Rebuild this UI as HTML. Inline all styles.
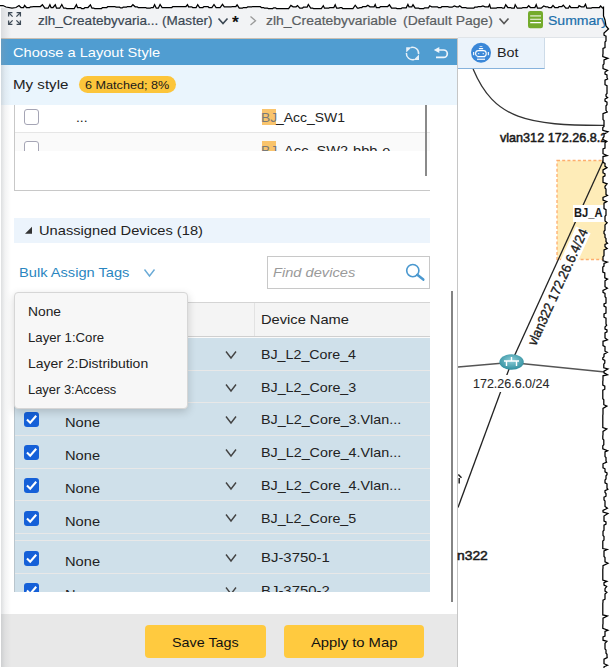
<!DOCTYPE html>
<html><head><meta charset="utf-8"><style>
*{box-sizing:border-box;margin:0;padding:0}
html,body{width:611px;height:668px;overflow:hidden;background:#fff;font-family:"Liberation Sans",sans-serif;color:#222}
.a{position:absolute}
.t{position:absolute;white-space:nowrap;line-height:1;transform-origin:0 0;}
</style></head><body>
<div class="a" style="left:0;top:0;width:611px;height:38px;background:#f2f3f5"></div>
<div class="a" style="left:458px;top:37px;width:153px;height:1px;background:#e0e4e8"></div>
<div class="a" style="left:1px;top:38px;width:456px;height:629px;background:#fff"></div>
<div class="a" style="left:1px;top:39px;width:456px;height:26px;background:#509dd1"></div>
<div class="a" style="left:1px;top:38px;width:456px;height:1px;background:#c9bfb3"></div>
<div class="a" style="left:1px;top:65px;width:456px;height:40px;background:#eaf5fd"></div>
<div class="a" style="left:1px;top:614px;width:456px;height:53px;background:#e8e8e8"></div>
<div class="a" style="left:457px;top:38px;width:1px;height:630px;background:#c6c6c6"></div>
<div class="t" style="left:38.39px;top:13.57px;font-size:13.5px;color:#3b4753;font-weight:normal;font-style:normal;transform:scaleX(1.0021);-webkit-text-stroke:0.2px currentColor">zlh_Createbyvaria... (Master)</div>
<div class="t" style="left:231.68px;top:14.21px;font-size:17px;color:#111;font-weight:bold;font-style:normal;transform:scaleX(1.0219);">*</div>
<div class="t" style="left:265.97px;top:13.57px;font-size:13.5px;color:#5a5e62;font-weight:normal;font-style:normal;transform:scaleX(1.0299);-webkit-text-stroke:0.2px currentColor">zlh_Createbyvariable</div>
<div class="t" style="left:402.95px;top:13.57px;font-size:13.5px;color:#5a5e62;font-weight:normal;font-style:normal;transform:scaleX(1.0325);-webkit-text-stroke:0.2px currentColor">(Default Page)</div>
<div class="t" style="left:548.11px;top:13.57px;font-size:13.5px;color:#1b6fab;font-weight:normal;font-style:normal;transform:scaleX(1.0397);-webkit-text-stroke:0.2px currentColor">Summary</div>
<svg class="a" style="left:217px;top:16px" width="12" height="10"><path d="M1.5 2.5 L6 7.5 L10.5 2.5" fill="none" stroke="#3b4753" stroke-width="1.6"/></svg>
<svg class="a" style="left:248px;top:15px" width="10" height="12"><path d="M2.5 1.5 L7.5 5.8 L2.5 10" fill="none" stroke="#9a9a9a" stroke-width="1.3"/></svg>
<svg class="a" style="left:498px;top:16px" width="12" height="10"><path d="M1.5 2.5 L6 7.5 L10.5 2.5" fill="none" stroke="#555" stroke-width="1.6"/></svg>
<svg class="a" style="left:7px;top:11px" width="16" height="16"><g fill="none" stroke="#3f4b57" stroke-width="1.3"><path d="M1.6 5.4V1.6H5.4M1.6 1.6L5.6 5.6"/><path d="M13.4 5.4V1.6H9.6M13.4 1.6L9.4 5.6"/><path d="M1.6 9.6V13.4H5.4M1.6 13.4L5.6 9.4"/><path d="M13.4 9.6V13.4H9.6M13.4 13.4L9.4 9.4"/></g></svg>
<svg class="a" style="left:528px;top:11px" width="16" height="18"><rect x="0" y="0" width="15" height="17.3" rx="2.2" fill="#74ab2c"/><path d="M2.2 4.8H13M2.2 8.4H13M2.2 11.6H13" stroke="#fff" stroke-width="1.3"/><path d="M2.2 4.8H13M2.2 8.4H13" stroke="#74ab2c" stroke-opacity="0.3" stroke-width="1.3"/></svg>
<div class="t" style="left:13.23px;top:45.57px;font-size:13.5px;color:#ffffff;font-weight:normal;font-style:normal;transform:scaleX(1.0829);">Choose a Layout Style</div>
<svg class="a" style="left:404px;top:45px" width="18" height="17"><g fill="none" stroke="#e6f0f8" stroke-width="1.5"><path d="M7 2.4A6.2 6.2 0 0 1 14.6 9.2"/><path d="M2.4 8A6.2 6.2 0 0 0 10.2 14.5"/></g><path d="M2.2 2.2H7.6L2.2 7.6Z" fill="#e6f0f8"/><path d="M15 9.5V15H9.5Z" fill="#e6f0f8"/></svg>
<svg class="a" style="left:432px;top:46px" width="17" height="14"><path d="M6.5 4H11.6A3.7 3.7 0 0 1 11.6 11.4H4" fill="none" stroke="#eef5fb" stroke-width="1.7"/><path d="M1.8 4L7.3 0.9V7.1Z" fill="#eef5fb"/></svg>
<div class="t" style="left:12.64px;top:77.57px;font-size:13.5px;color:#222;font-weight:normal;font-style:normal;transform:scaleX(1.1190);">My style</div>
<div class="a" style="left:79px;top:76px;width:97px;height:17px;border-radius:9px;background:#fcc53b"></div>
<div class="t" style="left:85.29px;top:79.10px;font-size:11.7px;color:#1a1a1a;font-weight:normal;font-style:normal;transform:scaleX(1.0803);">6 Matched; 8%</div>
<div class="a" style="left:14px;top:105px;width:1px;height:86px;background:#c8c8c8"></div>
<div class="a" style="left:14px;top:190px;width:416px;height:1px;background:#c8c8c8"></div>
<div class="a" style="left:15px;top:132px;width:415px;height:1px;background:#e6e6e6"></div>
<div class="a" style="left:15px;top:133px;width:415px;height:18px;background:#fafafa;overflow:hidden"><div class="a" style="left:9px;top:8px;width:15px;height:15px;border:1.5px solid #a5a5b5;border-radius:3px;background:#fff"></div></div>
<div class="a" style="left:24px;top:109px;width:15px;height:16px;border:1.5px solid #a5a5b5;border-radius:3px;background:#fff"></div>
<div class="t" style="left:75.62px;top:111.00px;font-size:13px;color:#222;font-weight:normal;font-style:normal;transform:scaleX(1.0699);">...</div>
<div class="a" style="left:262px;top:109px;width:14px;height:16px;background:#f9c46c"></div>
<div class="t" style="left:260.75px;top:110.57px;font-size:13.5px;color:#7a7a7a;font-weight:normal;font-style:normal;transform:scaleX(1.0315);">BJ</div>
<div class="t" style="left:276.17px;top:110.57px;font-size:13.5px;color:#222;font-weight:normal;font-style:normal;transform:scaleX(1.0329);">_Acc_SW1</div>
<div class="a" style="left:0;top:133px;width:457px;height:18px;overflow:hidden"><div class="a" style="left:262px;top:8px;width:14px;height:16px;background:#f9c46c"></div><div class="t" style="left:260.75px;top:10.57px;font-size:13.5px;color:#7a7a7a;font-weight:normal;font-style:normal;transform:scaleX(1.0315);">BJ</div><div class="t" style="left:276.18px;top:10.57px;font-size:13.5px;color:#222;font-weight:normal;font-style:normal;transform:scaleX(1.0814);">_Acc_SW2-bbb-e</div></div>
<div class="a" style="left:425px;top:105px;width:2px;height:71px;background:#8a8a8a"></div>
<div class="a" style="left:451px;top:291px;width:2px;height:311px;background:#848484"></div>
<div class="a" style="left:14px;top:218px;width:416px;height:25px;background:#ecf4fc"></div>
<svg class="a" style="left:24px;top:225px" width="10" height="10"><path d="M8 1.8V8.7H1Z" fill="#333"/></svg>
<div class="t" style="left:39.01px;top:223.97px;font-size:13.5px;color:#222;font-weight:normal;font-style:normal;transform:scaleX(1.0871);">Unassigned Devices (18)</div>
<div class="t" style="left:19.19px;top:265.57px;font-size:13.5px;color:#2a86c0;font-weight:normal;font-style:normal;transform:scaleX(1.0841);">Bulk Assign Tags</div>
<svg class="a" style="left:143px;top:267px" width="13" height="12"><path d="M1.5 2.5L6.5 9L11.5 2.5" fill="none" stroke="#6aaad6" stroke-width="1.4"/></svg>
<div class="a" style="left:267px;top:256px;width:163px;height:33px;border:1px solid #c8c8c8;background:#fff"></div>
<div class="t" style="left:273.37px;top:265.57px;font-size:13.5px;color:#9a9a9a;font-weight:normal;font-style:italic;transform:scaleX(1.0846);">Find devices</div>
<svg class="a" style="left:404px;top:263px" width="22" height="20"><circle cx="8.8" cy="7.6" r="6.1" fill="none" stroke="#4a98cf" stroke-width="1.6"/><path d="M13.3 11.8L19.3 16.6" stroke="#4a98cf" stroke-width="2.5" stroke-linecap="round"/></svg>
<div class="a" style="left:14px;top:302px;width:416px;height:1px;background:#d4d4d4"></div>
<div class="a" style="left:14px;top:303px;width:416px;height:33px;background:#f4f4f4"></div>
<div class="a" style="left:14px;top:336px;width:416px;height:1px;background:#cfcfcf"></div>
<div class="a" style="left:254px;top:303px;width:1px;height:33px;background:#e2e2e2"></div>
<div class="t" style="left:260.68px;top:312.87px;font-size:13.5px;color:#222;font-weight:normal;font-style:normal;transform:scaleX(1.0853);">Device Name</div>
<div class="a" style="left:14px;top:337px;width:416px;height:1px;background:#fafafa"></div>
<div class="a" style="left:14px;top:338px;width:416px;height:254px;background:#cfe0ea;overflow:hidden">
<div class="a" style="left:0;top:0;width:1px;height:254px;background:#b9c5cd"></div>
<div class="a" style="left:1px;top:32px;width:415px;height:1px;background:#e8e8e8"></div>
<div class="a" style="left:10px;top:8px;width:15px;height:15px;background:#1560d8;border-radius:3px"></div>
<svg class="a" style="left:10px;top:8px" width="15" height="15"><path d="M3 7.6L6.2 10.8L12.2 3.8" fill="none" stroke="#fff" stroke-width="2.1"/></svg>
<div class="t" style="left:51.28px;top:13.07px;font-size:13.5px;color:#222;font-weight:normal;font-style:normal;transform:scaleX(1.0859);">None</div>
<svg class="a" style="left:211px;top:12.0px" width="12" height="10"><path d="M1 1.5L6 8L11 1.5" fill="none" stroke="#444" stroke-width="1.4"/></svg>
<div class="t" style="left:246.72px;top:10.07px;font-size:13.5px;color:#222;font-weight:normal;font-style:normal;transform:scaleX(1.0548);">BJ_L2_Core_4</div>
<div class="a" style="left:1px;top:64px;width:415px;height:1px;background:#e8e8e8"></div>
<div class="a" style="left:10px;top:41px;width:15px;height:15px;background:#1560d8;border-radius:3px"></div>
<svg class="a" style="left:10px;top:41px" width="15" height="15"><path d="M3 7.6L6.2 10.8L12.2 3.8" fill="none" stroke="#fff" stroke-width="2.1"/></svg>
<div class="t" style="left:51.28px;top:45.57px;font-size:13.5px;color:#222;font-weight:normal;font-style:normal;transform:scaleX(1.0859);">None</div>
<svg class="a" style="left:211px;top:44.5px" width="12" height="10"><path d="M1 1.5L6 8L11 1.5" fill="none" stroke="#444" stroke-width="1.4"/></svg>
<div class="t" style="left:246.72px;top:42.57px;font-size:13.5px;color:#222;font-weight:normal;font-style:normal;transform:scaleX(1.0574);">BJ_L2_Core_3</div>
<div class="a" style="left:1px;top:97px;width:415px;height:1px;background:#e8e8e8"></div>
<div class="a" style="left:10px;top:74px;width:15px;height:15px;background:#1560d8;border-radius:3px"></div>
<svg class="a" style="left:10px;top:74px" width="15" height="15"><path d="M3 7.6L6.2 10.8L12.2 3.8" fill="none" stroke="#fff" stroke-width="2.1"/></svg>
<div class="t" style="left:51.28px;top:78.27px;font-size:13.5px;color:#222;font-weight:normal;font-style:normal;transform:scaleX(1.0859);">None</div>
<svg class="a" style="left:211px;top:77.0px" width="12" height="10"><path d="M1 1.5L6 8L11 1.5" fill="none" stroke="#444" stroke-width="1.4"/></svg>
<div class="t" style="left:246.71px;top:75.17px;font-size:13.5px;color:#222;font-weight:normal;font-style:normal;transform:scaleX(1.0613);">BJ_L2_Core_3.Vlan...</div>
<div class="a" style="left:1px;top:130px;width:415px;height:1px;background:#e8e8e8"></div>
<div class="a" style="left:10px;top:107px;width:15px;height:15px;background:#1560d8;border-radius:3px"></div>
<svg class="a" style="left:10px;top:107px" width="15" height="15"><path d="M3 7.6L6.2 10.8L12.2 3.8" fill="none" stroke="#fff" stroke-width="2.1"/></svg>
<div class="t" style="left:51.28px;top:111.07px;font-size:13.5px;color:#222;font-weight:normal;font-style:normal;transform:scaleX(1.0859);">None</div>
<svg class="a" style="left:211px;top:110.0px" width="12" height="10"><path d="M1 1.5L6 8L11 1.5" fill="none" stroke="#444" stroke-width="1.4"/></svg>
<div class="t" style="left:246.71px;top:108.07px;font-size:13.5px;color:#222;font-weight:normal;font-style:normal;transform:scaleX(1.0613);">BJ_L2_Core_4.Vlan...</div>
<div class="a" style="left:1px;top:162px;width:415px;height:1px;background:#e8e8e8"></div>
<div class="a" style="left:10px;top:140px;width:15px;height:15px;background:#1560d8;border-radius:3px"></div>
<svg class="a" style="left:10px;top:140px" width="15" height="15"><path d="M3 7.6L6.2 10.8L12.2 3.8" fill="none" stroke="#fff" stroke-width="2.1"/></svg>
<div class="t" style="left:51.28px;top:143.87px;font-size:13.5px;color:#222;font-weight:normal;font-style:normal;transform:scaleX(1.0859);">None</div>
<svg class="a" style="left:211px;top:142.5px" width="12" height="10"><path d="M1 1.5L6 8L11 1.5" fill="none" stroke="#444" stroke-width="1.4"/></svg>
<div class="t" style="left:246.71px;top:140.87px;font-size:13.5px;color:#222;font-weight:normal;font-style:normal;transform:scaleX(1.0613);">BJ_L2_Core_4.Vlan...</div>
<div class="a" style="left:1px;top:195px;width:415px;height:1px;background:#e8e8e8"></div>
<div class="a" style="left:10px;top:173px;width:15px;height:15px;background:#1560d8;border-radius:3px"></div>
<svg class="a" style="left:10px;top:173px" width="15" height="15"><path d="M3 7.6L6.2 10.8L12.2 3.8" fill="none" stroke="#fff" stroke-width="2.1"/></svg>
<div class="t" style="left:51.28px;top:176.57px;font-size:13.5px;color:#222;font-weight:normal;font-style:normal;transform:scaleX(1.0859);">None</div>
<svg class="a" style="left:211px;top:175.0px" width="12" height="10"><path d="M1 1.5L6 8L11 1.5" fill="none" stroke="#444" stroke-width="1.4"/></svg>
<div class="t" style="left:246.72px;top:173.57px;font-size:13.5px;color:#222;font-weight:normal;font-style:normal;transform:scaleX(1.0571);">BJ_L2_Core_5</div>
<div class="a" style="left:1px;top:235px;width:415px;height:1px;background:#e8e8e8"></div>
<div class="a" style="left:10px;top:213px;width:15px;height:15px;background:#1560d8;border-radius:3px"></div>
<svg class="a" style="left:10px;top:213px" width="15" height="15"><path d="M3 7.6L6.2 10.8L12.2 3.8" fill="none" stroke="#fff" stroke-width="2.1"/></svg>
<div class="t" style="left:51.28px;top:216.57px;font-size:13.5px;color:#222;font-weight:normal;font-style:normal;transform:scaleX(1.0859);">None</div>
<svg class="a" style="left:211px;top:215.0px" width="12" height="10"><path d="M1 1.5L6 8L11 1.5" fill="none" stroke="#444" stroke-width="1.4"/></svg>
<div class="t" style="left:246.66px;top:213.37px;font-size:13.5px;color:#222;font-weight:normal;font-style:normal;transform:scaleX(1.1034);">BJ-3750-1</div>
<div class="a" style="left:1px;top:268px;width:415px;height:1px;background:#e8e8e8"></div>
<div class="a" style="left:10px;top:245px;width:15px;height:15px;background:#1560d8;border-radius:3px"></div>
<svg class="a" style="left:10px;top:245px" width="15" height="15"><path d="M3 7.6L6.2 10.8L12.2 3.8" fill="none" stroke="#fff" stroke-width="2.1"/></svg>
<div class="t" style="left:51.28px;top:249.57px;font-size:13.5px;color:#222;font-weight:normal;font-style:normal;transform:scaleX(1.0859);">None</div>
<svg class="a" style="left:211px;top:248.0px" width="12" height="10"><path d="M1 1.5L6 8L11 1.5" fill="none" stroke="#444" stroke-width="1.4"/></svg>
<div class="t" style="left:246.66px;top:246.17px;font-size:13.5px;color:#222;font-weight:normal;font-style:normal;transform:scaleX(1.1037);">BJ-3750-2</div>
<div class="a" style="left:1px;top:202px;width:415px;height:1px;background:#e8e8e8"></div>
</div>
<div class="a" style="left:14px;top:291.5px;width:173.5px;height:117px;background:#f7f7f7;border:1px solid #d6d6d6;border-radius:4px;box-shadow:0 3px 8px rgba(0,0,0,0.17)"></div>
<div class="t" style="left:27.96px;top:304.67px;font-size:13.5px;color:#222;font-weight:normal;font-style:normal;transform:scaleX(1.0235);">None</div>
<div class="t" style="left:28.02px;top:330.57px;font-size:13.5px;color:#222;font-weight:normal;font-style:normal;transform:scaleX(0.9759);">Layer 1:Core</div>
<div class="t" style="left:27.95px;top:356.57px;font-size:13.5px;color:#222;font-weight:normal;font-style:normal;transform:scaleX(1.0329);">Layer 2:Distribution</div>
<div class="t" style="left:28.04px;top:382.57px;font-size:13.5px;color:#222;font-weight:normal;font-style:normal;transform:scaleX(0.9568);">Layer 3:Access</div>
<div class="a" style="left:145px;top:625px;width:121px;height:33px;background:#ffca3f;border-radius:4px"></div>
<div class="a" style="left:284px;top:625px;width:140px;height:33px;background:#ffca3f;border-radius:4px"></div>
<div class="t" style="left:172.09px;top:635.97px;font-size:13.5px;color:#111;font-weight:normal;font-style:normal;transform:scaleX(1.0612);">Save Tags</div>
<div class="t" style="left:310.65px;top:635.97px;font-size:13.5px;color:#111;font-weight:normal;font-style:normal;transform:scaleX(1.0965);">Apply to Map</div>
<svg class="a" style="left:458px;top:38px" width="153" height="630" viewBox="458 38 153 630"><path d="M473.1 69 C 494.2 119.5, 527.7 125.6, 605 125.3" fill="none" stroke="#333" stroke-width="1.3"/><rect x="557" y="160.5" width="60" height="99" fill="#feecb8" stroke="#fdae6e" stroke-width="1.3" stroke-dasharray="3,2.2"/><path d="M605 157 L511.6 362" stroke="#222" stroke-width="1.3"/><path d="M511.6 362 L458 507.5" stroke="#222" stroke-width="1.3"/><path d="M458 367 L511 362.5 L605 372" fill="none" stroke="#555" stroke-width="1.5"/><defs><radialGradient id="rg" cx="0.5" cy="0.4" r="0.6"><stop offset="0" stop-color="#8fd0da"/><stop offset="1" stop-color="#2f8e9e"/></radialGradient></defs><ellipse cx="511.6" cy="362" rx="12.2" ry="7.8" fill="url(#rg)"/><path d="M504 361H519M506.5 361V366M516.5 361V366M511.5 357V361" stroke="#fff" stroke-width="1.4"/></svg>
<div class="a" style="left:523.41px;top:343.16px;width:128px;height:16px;background:#fff;transform-origin:0 0;transform:rotate(-65.5deg)"><div class="t" style="left:1.69px;top:1.50px;font-size:13.5px;color:#1a1a1a;font-weight:normal;font-style:normal;transform:scaleX(0.9479);-webkit-text-stroke:0.35px #1a1a1a">vlan322 172.26.6.4/24</div></div>
<div class="t" style="left:500.40px;top:130.87px;font-size:13.5px;color:#1a1a1a;font-weight:normal;font-style:normal;transform:scaleX(0.9334);-webkit-text-stroke:0.55px #1a1a1a">vlan312 172.26.8.2</div>
<div class="a" style="left:573px;top:205px;width:40px;height:16.5px;background:#fff"></div>
<div class="t" style="left:573.61px;top:205.97px;font-size:13.5px;color:#1a1a1a;font-weight:bold;font-style:normal;transform:scaleX(0.8254);-webkit-text-stroke:0.1px #1a1a1a">BJ_A</div>
<div class="a" style="left:472px;top:375px;width:79px;height:17px;background:#fff"></div>
<div class="t" style="left:472.86px;top:377.27px;font-size:13.5px;color:#2a2a2a;font-weight:normal;font-style:normal;transform:scaleX(0.9258);-webkit-text-stroke:0.1px #2a2a2a">172.26.6.0/24</div>
<svg class="a" style="left:458px;top:473px" width="5" height="11"><path d="M0.3 1.5L3.5 4.8M1.2 5V10.5" stroke="#222" stroke-width="1.5"/></svg>
<div class="t" style="left:457.13px;top:549.07px;font-size:13.5px;color:#1a1a1a;font-weight:normal;font-style:normal;transform:scaleX(1.0255);-webkit-text-stroke:0.55px #1a1a1a">n322</div>
<div class="a" style="left:458px;top:38px;width:87px;height:31px;background:#ebf3fb;border-right:1px solid #cddbe8;border-bottom:1.5px solid #86b2dc"></div>
<svg class="a" style="left:468px;top:40px" width="26" height="26"><circle cx="13" cy="12.75" r="10" fill="#3a87d8"/><rect x="11.6" y="6" width="2.8" height="0.9" fill="#cfe0f5"/><rect x="10.8" y="8" width="4.4" height="1.3" rx="0.6" fill="#fff"/><rect x="7.6" y="10.6" width="10.6" height="5.9" rx="2.8" fill="none" stroke="#fff" stroke-width="1.1"/><path d="M9.9 13.7H11.3M14.6 13.7H16" stroke="#fff" stroke-width="0.9"/><rect x="5.1" y="12" width="1.1" height="3.2" fill="#fff"/><rect x="19.8" y="12" width="1.1" height="3.2" fill="#fff"/><rect x="9" y="18.7" width="8" height="1.1" fill="#fff"/><rect x="9" y="17.3" width="8" height="0.8" fill="#8fb8e8"/></svg>
<div class="t" style="left:496.51px;top:46.27px;font-size:13.5px;color:#222;font-weight:normal;font-style:normal;transform:scaleX(1.0629);">Bot</div>
<div class="a" style="left:1px;top:38px;width:10px;height:629px;background:linear-gradient(to right,rgba(150,155,160,0.32),rgba(150,155,160,0.12) 40%,rgba(150,155,160,0))"></div>
<div class="a" style="left:1px;top:8px;width:10px;height:30px;background:linear-gradient(to right,rgba(150,155,160,0.25),rgba(150,155,160,0))"></div>
<div class="a" style="left:0;top:667px;width:611px;height:1px;background:#fff"></div>
<div class="a" style="left:0;top:0;width:1px;height:668px;background:#fff"></div>
<svg class="a" style="left:0;top:0" width="611" height="668"><path d="M0 0 L611 0 L611 668 605.0 673.0 L607.9 671.5 L604.0 670.2 L604.0 666.8 L607.5 665.2 L604.0 663.7 L604.0 659.2 L607.2 657.6 L607.0 656.1 L607.0 654.3 L606.0 653.3 L606.0 649.9 L605.0 648.9 L605.0 643.3 L606.9 641.4 L603.0 640.2 L603.0 637.0 L605.0 636.0 L605.0 631.4 L607.9 630.2 L602.8 628.4 L602.8 624.9 L603.0 623.9 L603.0 618.2 L607.4 616.0 L602.8 614.9 L602.8 609.5 L602.8 608.5 L602.8 603.2 L603.0 602.2 L603.0 600.2 L605.0 599.2 L605.0 594.1 L606.9 592.3 L605.0 591.1 L605.0 588.7 L606.7 586.4 L604.0 585.1 L604.0 582.7 L606.9 581.4 L602.8 580.1 L602.8 575.1 L602.8 574.1 L602.8 569.2 L603.0 568.2 L603.0 565.6 L608.0 563.2 L605.0 561.8 L605.0 557.5 L604.0 556.5 L604.0 551.0 L607.3 549.5 L602.8 548.5 L602.8 545.8 L602.8 544.8 L602.8 541.0 L604.0 540.0 L604.0 536.5 L603.0 535.5 L603.0 531.2 L604.0 530.2 L604.0 525.1 L606.0 524.1 L606.0 522.0 L604.0 521.0 L604.0 516.0 L607.9 513.5 L603.0 512.1 L603.0 510.5 L607.4 508.2 L605.0 506.5 L605.0 500.9 L604.0 499.9 L604.0 497.2 L606.0 496.2 L606.0 493.5 L605.0 492.5 L605.0 490.7 L607.9 489.3 L607.0 488.2 L607.0 486.5 L607.0 485.5 L607.0 483.9 L605.0 482.9 L605.0 480.0 L606.0 479.0 L606.0 475.8 L607.0 474.8 L607.0 472.9 L605.0 471.9 L605.0 468.8 L603.0 467.8 L603.0 463.8 L606.6 462.1 L606.0 461.0 L606.0 457.6 L605.0 456.6 L605.0 451.8 L607.6 450.7 L602.8 448.8 L602.8 445.8 L603.8 444.8 L603.8 440.0 L602.8 439.0 L602.8 435.8 L603.0 434.8 L603.0 431.4 L606.8 428.9 L602.8 427.5 L602.8 421.8 L602.8 420.8 L602.8 415.2 L603.0 414.2 L603.0 408.4 L606.9 406.1 L603.8 404.7 L603.8 399.7 L602.8 398.7 L602.8 396.3 L602.8 395.3 L602.8 390.2 L604.8 389.2 L604.8 386.1 L602.8 385.1 L602.8 381.3 L603.0 380.3 L603.0 375.8 L607.5 374.7 L604.0 372.8 L604.0 371.1 L607.9 369.0 L603.8 367.8 L603.8 364.1 L604.8 363.1 L604.8 360.4 L602.8 359.4 L602.8 357.8 L604.0 356.8 L604.0 354.2 L607.3 352.3 L605.0 351.2 L605.0 346.6 L603.0 345.6 L603.0 341.3 L607.5 339.8 L605.0 337.9 L605.0 332.9 L607.0 331.9 L607.0 330.0 L605.0 329.0 L605.0 327.0 L606.7 325.2 L606.0 324.1 L606.0 318.2 L604.0 317.2 L604.0 314.0 L606.0 313.0 L606.0 307.1 L604.0 306.1 L604.0 304.0 L606.0 303.0 L606.0 297.7 L605.0 296.7 L605.0 293.4 L603.0 292.4 L603.0 290.5 L607.4 288.2 L605.0 286.7 L605.0 280.8 L607.6 279.1 L604.8 277.8 L604.8 273.0 L602.8 272.0 L602.8 267.1 L604.0 266.1 L604.0 263.4 L607.3 262.0 L603.0 260.8 L603.0 256.8 L604.0 255.8 L604.0 249.8 L607.2 248.5 L605.0 246.6 L605.0 244.4 L607.5 243.2 L606.0 241.7 L606.0 238.4 L605.0 237.4 L605.0 234.5 L604.0 233.5 L604.0 231.3 L605.0 230.3 L605.0 224.9 L607.2 222.7 L605.0 221.0 L605.0 216.3 L606.0 215.3 L606.0 209.6 L604.0 208.6 L604.0 203.2 L606.8 201.6 L603.0 200.1 L603.0 197.5 L607.5 195.5 L606.0 194.5 L606.0 189.1 L605.0 188.1 L605.0 186.3 L607.1 183.8 L603.0 182.4 L603.0 176.9 L605.0 175.9 L605.0 173.8 L603.0 172.8 L603.0 169.9 L607.0 167.6 L605.0 166.3 L605.0 163.4 L603.0 162.4 L603.0 156.6 L607.2 155.6 L603.0 153.7 L603.0 149.0 L605.0 148.0 L605.0 142.8 L606.9 141.3 L603.0 139.5 L603.0 137.7 L604.0 136.7 L604.0 134.3 L608.0 131.8 L602.8 130.3 L602.8 127.5 L604.0 126.5 L604.0 120.6 L603.0 119.6 L603.0 113.6 L607.2 111.9 L606.0 110.4 L606.0 105.8 L607.0 104.8 L607.0 102.1 L605.0 101.1 L605.0 99.0 L607.6 97.6 L606.0 96.3 L606.0 94.5 L607.0 93.5 L607.0 88.5 L607.0 87.5 L607.0 85.7 L605.0 84.7 L605.0 80.2 L607.6 78.9 L607.0 77.7 L607.0 75.0 L605.0 74.0 L605.0 72.1 L607.6 70.4 L603.0 68.6 L603.0 64.9 L604.0 63.9 L604.0 59.9 L607.9 58.3 L602.8 56.6 L602.8 54.8 L603.0 53.8 L603.0 48.5 L605.0 47.5 L605.0 42.0 L606.0 41.0 L606.0 36.2 L604.0 35.2 L604.0 33.0 L608.5 29.0 L606.0 26.0 L605.0 20.0 L603.5 16.0 L603.5 6.5 L603.5 6.5 L603.5 8.2 L602.7 8.2 L600.6 6.0 L599.4 7.5 L596.7 7.5 L595.7 7.5 L592.2 7.5 L591.2 8.2 L586.8 8.2 L585.5 4.3 L584.0 6.8 L581.3 6.8 L579.1 5.6 L578.0 7.5 L574.5 7.5 L573.5 7.5 L570.9 7.5 L569.6 5.8 L568.3 8.2 L565.8 8.2 L563.3 5.1 L561.9 6.5 L559.1 6.5 L558.1 7.5 L554.8 7.5 L553.0 5.4 L551.4 7.5 L548.7 7.5 L547.7 6.8 L545.9 6.8 L543.7 6.0 L541.2 8.2 L537.5 8.2 L536.2 4.7 L534.9 7.5 L530.5 7.5 L528.7 5.7 L527.1 7.5 L522.8 7.5 L521.8 8.2 L517.3 8.2 L515.2 4.7 L514.2 8.2 L511.7 8.2 L510.7 7.5 L507.8 7.5 L505.7 4.8 L504.2 8.2 L502.6 8.2 L501.6 7.5 L497.3 7.5 L496.3 8.2 L494.4 8.2 L493.4 8.2 L490.6 8.2 L489.6 4.7 L488.4 6.8 L485.1 6.8 L482.9 5.9 L481.0 6.5 L478.2 6.5 L477.2 7.2 L474.8 7.2 L473.8 8.2 L470.6 8.2 L469.6 8.2 L466.9 8.2 L465.9 7.5 L461.9 7.5 L459.7 5.8 L458.5 6.8 L456.7 6.8 L454.3 6.0 L452.1 7.2 L449.0 7.2 L448.0 6.5 L445.4 6.5 L444.4 6.5 L441.9 6.5 L440.9 7.5 L438.4 7.5 L437.4 6.8 L434.7 6.8 L433.7 6.8 L431.7 6.8 L429.7 5.8 L428.5 7.8 L424.7 7.8 L423.7 8.5 L419.6 8.5 L418.6 8.2 L415.2 8.2 L413.0 4.8 L411.8 6.8 L409.0 6.8 L407.9 4.5 L406.2 7.8 L402.2 7.8 L401.2 8.5 L397.0 8.5 L396.0 8.2 L391.6 8.2 L389.4 4.8 L387.7 6.5 L384.3 6.5 L383.3 6.5 L380.5 6.5 L379.5 7.5 L376.3 7.5 L375.2 4.6 L374.1 6.8 L370.0 6.8 L367.8 5.2 L366.0 6.5 L362.8 6.5 L361.8 7.5 L359.9 7.5 L358.9 8.2 L357.4 8.2 L355.2 5.2 L352.9 8.5 L351.0 8.5 L350.0 8.5 L347.2 8.5 L346.2 8.5 L342.7 8.5 L341.7 7.5 L340.1 7.5 L339.1 8.2 L336.6 8.2 L335.2 4.7 L333.8 7.5 L329.8 7.5 L328.8 8.2 L324.5 8.2 L323.3 5.7 L321.3 8.5 L318.1 8.5 L317.1 8.5 L313.6 8.5 L312.6 8.2 L310.7 8.2 L308.3 4.5 L307.1 7.2 L303.4 7.2 L302.4 8.2 L299.8 8.2 L297.5 5.6 L296.1 6.8 L293.1 6.8 L290.9 5.4 L288.6 8.5 L284.7 8.5 L283.7 8.5 L279.7 8.5 L278.7 8.5 L276.5 8.5 L275.5 7.8 L273.7 7.8 L272.7 8.5 L268.4 8.5 L267.4 8.2 L264.5 8.2 L263.5 7.5 L261.3 7.5 L260.3 6.5 L255.8 6.5 L254.8 6.5 L252.7 6.5 L251.7 6.8 L247.8 6.8 L246.8 7.5 L243.4 7.5 L242.4 8.2 L239.3 8.2 L237.1 4.9 L235.9 6.5 L232.3 6.5 L231.3 6.8 L228.9 6.8 L227.9 6.8 L224.3 6.8 L222.5 4.3 L220.1 7.5 L216.1 7.5 L214.0 4.5 L211.9 7.5 L209.0 7.5 L208.0 6.5 L203.9 6.5 L202.9 7.5 L199.6 7.5 L197.7 4.7 L196.1 7.5 L192.7 7.5 L191.7 6.8 L188.5 6.8 L187.5 4.6 L186.0 6.5 L184.3 6.5 L183.3 6.5 L180.3 6.5 L179.3 6.5 L176.6 6.5 L175.6 6.5 L172.8 6.5 L171.8 7.5 L167.4 7.5 L166.4 7.5 L162.1 7.5 L160.1 4.5 L158.3 8.2 L156.3 8.2 L154.6 4.7 L153.2 7.5 L151.3 7.5 L150.3 8.2 L146.7 8.2 L145.7 7.5 L143.4 7.5 L142.4 7.5 L138.2 7.5 L137.2 6.8 L135.2 6.8 L132.9 4.7 L131.3 6.5 L127.5 6.5 L126.5 7.2 L123.2 7.2 L122.2 7.9 L120.6 7.9 L119.6 7.2 L116.0 7.2 L115.0 6.5 L110.5 6.5 L109.5 6.5 L107.8 6.5 L106.8 7.5 L102.5 7.5 L101.5 8.5 L98.2 8.5 L97.2 8.5 L94.7 8.5 L93.7 8.2 L92.0 8.2 L90.4 4.9 L88.0 7.5 L84.9 7.5 L83.9 8.5 L81.6 8.5 L80.6 7.5 L77.5 7.5 L76.4 4.6 L74.2 8.5 L71.6 8.5 L70.6 8.5 L66.8 8.5 L65.8 8.2 L63.7 8.2 L61.8 4.5 L59.7 8.2 L56.5 8.2 L55.3 4.8 L53.0 7.5 L51.1 7.5 L49.9 4.7 L48.1 8.2 L44.8 8.2 L42.4 4.7 L40.4 6.5 L36.5 6.5 L35.5 6.5 L33.2 6.5 L32.2 6.8 L30.6 6.8 L29.6 7.5 L26.4 7.5 L24.6 5.4 L23.5 7.5 L21.0 7.5 L19.0 5.5 L16.0 7.5 L12.0 8.0 L6.0 7.0 L3.0 5.5 L0.0 5.5 Z" fill="#fff"/><path d="M0.0 5.5 L3.0 5.5 L6.0 7.0 L12.0 8.0 L16.0 7.5 L19.0 5.5 L21.0 7.5 L23.5 7.5 L24.6 5.4 L26.4 7.5 L29.6 7.5 L30.6 6.8 L32.2 6.8 L33.2 6.5 L35.5 6.5 L36.5 6.5 L40.4 6.5 L42.4 4.7 L44.8 8.2 L48.1 8.2 L49.9 4.7 L51.1 7.5 L53.0 7.5 L55.3 4.8 L56.5 8.2 L59.7 8.2 L61.8 4.5 L63.7 8.2 L65.8 8.2 L66.8 8.5 L70.6 8.5 L71.6 8.5 L74.2 8.5 L76.4 4.6 L77.5 7.5 L80.6 7.5 L81.6 8.5 L83.9 8.5 L84.9 7.5 L88.0 7.5 L90.4 4.9 L92.0 8.2 L93.7 8.2 L94.7 8.5 L97.2 8.5 L98.2 8.5 L101.5 8.5 L102.5 7.5 L106.8 7.5 L107.8 6.5 L109.5 6.5 L110.5 6.5 L115.0 6.5 L116.0 7.2 L119.6 7.2 L120.6 7.9 L122.2 7.9 L123.2 7.2 L126.5 7.2 L127.5 6.5 L131.3 6.5 L132.9 4.7 L135.2 6.8 L137.2 6.8 L138.2 7.5 L142.4 7.5 L143.4 7.5 L145.7 7.5 L146.7 8.2 L150.3 8.2 L151.3 7.5 L153.2 7.5 L154.6 4.7 L156.3 8.2 L158.3 8.2 L160.1 4.5 L162.1 7.5 L166.4 7.5 L167.4 7.5 L171.8 7.5 L172.8 6.5 L175.6 6.5 L176.6 6.5 L179.3 6.5 L180.3 6.5 L183.3 6.5 L184.3 6.5 L186.0 6.5 L187.5 4.6 L188.5 6.8 L191.7 6.8 L192.7 7.5 L196.1 7.5 L197.7 4.7 L199.6 7.5 L202.9 7.5 L203.9 6.5 L208.0 6.5 L209.0 7.5 L211.9 7.5 L214.0 4.5 L216.1 7.5 L220.1 7.5 L222.5 4.3 L224.3 6.8 L227.9 6.8 L228.9 6.8 L231.3 6.8 L232.3 6.5 L235.9 6.5 L237.1 4.9 L239.3 8.2 L242.4 8.2 L243.4 7.5 L246.8 7.5 L247.8 6.8 L251.7 6.8 L252.7 6.5 L254.8 6.5 L255.8 6.5 L260.3 6.5 L261.3 7.5 L263.5 7.5 L264.5 8.2 L267.4 8.2 L268.4 8.5 L272.7 8.5 L273.7 7.8 L275.5 7.8 L276.5 8.5 L278.7 8.5 L279.7 8.5 L283.7 8.5 L284.7 8.5 L288.6 8.5 L290.9 5.4 L293.1 6.8 L296.1 6.8 L297.5 5.6 L299.8 8.2 L302.4 8.2 L303.4 7.2 L307.1 7.2 L308.3 4.5 L310.7 8.2 L312.6 8.2 L313.6 8.5 L317.1 8.5 L318.1 8.5 L321.3 8.5 L323.3 5.7 L324.5 8.2 L328.8 8.2 L329.8 7.5 L333.8 7.5 L335.2 4.7 L336.6 8.2 L339.1 8.2 L340.1 7.5 L341.7 7.5 L342.7 8.5 L346.2 8.5 L347.2 8.5 L350.0 8.5 L351.0 8.5 L352.9 8.5 L355.2 5.2 L357.4 8.2 L358.9 8.2 L359.9 7.5 L361.8 7.5 L362.8 6.5 L366.0 6.5 L367.8 5.2 L370.0 6.8 L374.1 6.8 L375.2 4.6 L376.3 7.5 L379.5 7.5 L380.5 6.5 L383.3 6.5 L384.3 6.5 L387.7 6.5 L389.4 4.8 L391.6 8.2 L396.0 8.2 L397.0 8.5 L401.2 8.5 L402.2 7.8 L406.2 7.8 L407.9 4.5 L409.0 6.8 L411.8 6.8 L413.0 4.8 L415.2 8.2 L418.6 8.2 L419.6 8.5 L423.7 8.5 L424.7 7.8 L428.5 7.8 L429.7 5.8 L431.7 6.8 L433.7 6.8 L434.7 6.8 L437.4 6.8 L438.4 7.5 L440.9 7.5 L441.9 6.5 L444.4 6.5 L445.4 6.5 L448.0 6.5 L449.0 7.2 L452.1 7.2 L454.3 6.0 L456.7 6.8 L458.5 6.8 L459.7 5.8 L461.9 7.5 L465.9 7.5 L466.9 8.2 L469.6 8.2 L470.6 8.2 L473.8 8.2 L474.8 7.2 L477.2 7.2 L478.2 6.5 L481.0 6.5 L482.9 5.9 L485.1 6.8 L488.4 6.8 L489.6 4.7 L490.6 8.2 L493.4 8.2 L494.4 8.2 L496.3 8.2 L497.3 7.5 L501.6 7.5 L502.6 8.2 L504.2 8.2 L505.7 4.8 L507.8 7.5 L510.7 7.5 L511.7 8.2 L514.2 8.2 L515.2 4.7 L517.3 8.2 L521.8 8.2 L522.8 7.5 L527.1 7.5 L528.7 5.7 L530.5 7.5 L534.9 7.5 L536.2 4.7 L537.5 8.2 L541.2 8.2 L543.7 6.0 L545.9 6.8 L547.7 6.8 L548.7 7.5 L551.4 7.5 L553.0 5.4 L554.8 7.5 L558.1 7.5 L559.1 6.5 L561.9 6.5 L563.3 5.1 L565.8 8.2 L568.3 8.2 L569.6 5.8 L570.9 7.5 L573.5 7.5 L574.5 7.5 L578.0 7.5 L579.1 5.6 L581.3 6.8 L584.0 6.8 L585.5 4.3 L586.8 8.2 L591.2 8.2 L592.2 7.5 L595.7 7.5 L596.7 7.5 L599.4 7.5 L600.6 6.0 L602.7 8.2 L603.5 8.2 L603.5 6.5 L603.5 6.5 L603.5 16.0 L605.0 20.0 L606.0 26.0 L608.5 29.0 L604.0 33.0 L604.0 35.2 L606.0 36.2 L606.0 41.0 L605.0 42.0 L605.0 47.5 L603.0 48.5 L603.0 53.8 L602.8 54.8 L602.8 56.6 L607.9 58.3 L604.0 59.9 L604.0 63.9 L603.0 64.9 L603.0 68.6 L607.6 70.4 L605.0 72.1 L605.0 74.0 L607.0 75.0 L607.0 77.7 L607.6 78.9 L605.0 80.2 L605.0 84.7 L607.0 85.7 L607.0 87.5 L607.0 88.5 L607.0 93.5 L606.0 94.5 L606.0 96.3 L607.6 97.6 L605.0 99.0 L605.0 101.1 L607.0 102.1 L607.0 104.8 L606.0 105.8 L606.0 110.4 L607.2 111.9 L603.0 113.6 L603.0 119.6 L604.0 120.6 L604.0 126.5 L602.8 127.5 L602.8 130.3 L608.0 131.8 L604.0 134.3 L604.0 136.7 L603.0 137.7 L603.0 139.5 L606.9 141.3 L605.0 142.8 L605.0 148.0 L603.0 149.0 L603.0 153.7 L607.2 155.6 L603.0 156.6 L603.0 162.4 L605.0 163.4 L605.0 166.3 L607.0 167.6 L603.0 169.9 L603.0 172.8 L605.0 173.8 L605.0 175.9 L603.0 176.9 L603.0 182.4 L607.1 183.8 L605.0 186.3 L605.0 188.1 L606.0 189.1 L606.0 194.5 L607.5 195.5 L603.0 197.5 L603.0 200.1 L606.8 201.6 L604.0 203.2 L604.0 208.6 L606.0 209.6 L606.0 215.3 L605.0 216.3 L605.0 221.0 L607.2 222.7 L605.0 224.9 L605.0 230.3 L604.0 231.3 L604.0 233.5 L605.0 234.5 L605.0 237.4 L606.0 238.4 L606.0 241.7 L607.5 243.2 L605.0 244.4 L605.0 246.6 L607.2 248.5 L604.0 249.8 L604.0 255.8 L603.0 256.8 L603.0 260.8 L607.3 262.0 L604.0 263.4 L604.0 266.1 L602.8 267.1 L602.8 272.0 L604.8 273.0 L604.8 277.8 L607.6 279.1 L605.0 280.8 L605.0 286.7 L607.4 288.2 L603.0 290.5 L603.0 292.4 L605.0 293.4 L605.0 296.7 L606.0 297.7 L606.0 303.0 L604.0 304.0 L604.0 306.1 L606.0 307.1 L606.0 313.0 L604.0 314.0 L604.0 317.2 L606.0 318.2 L606.0 324.1 L606.7 325.2 L605.0 327.0 L605.0 329.0 L607.0 330.0 L607.0 331.9 L605.0 332.9 L605.0 337.9 L607.5 339.8 L603.0 341.3 L603.0 345.6 L605.0 346.6 L605.0 351.2 L607.3 352.3 L604.0 354.2 L604.0 356.8 L602.8 357.8 L602.8 359.4 L604.8 360.4 L604.8 363.1 L603.8 364.1 L603.8 367.8 L607.9 369.0 L604.0 371.1 L604.0 372.8 L607.5 374.7 L603.0 375.8 L603.0 380.3 L602.8 381.3 L602.8 385.1 L604.8 386.1 L604.8 389.2 L602.8 390.2 L602.8 395.3 L602.8 396.3 L602.8 398.7 L603.8 399.7 L603.8 404.7 L606.9 406.1 L603.0 408.4 L603.0 414.2 L602.8 415.2 L602.8 420.8 L602.8 421.8 L602.8 427.5 L606.8 428.9 L603.0 431.4 L603.0 434.8 L602.8 435.8 L602.8 439.0 L603.8 440.0 L603.8 444.8 L602.8 445.8 L602.8 448.8 L607.6 450.7 L605.0 451.8 L605.0 456.6 L606.0 457.6 L606.0 461.0 L606.6 462.1 L603.0 463.8 L603.0 467.8 L605.0 468.8 L605.0 471.9 L607.0 472.9 L607.0 474.8 L606.0 475.8 L606.0 479.0 L605.0 480.0 L605.0 482.9 L607.0 483.9 L607.0 485.5 L607.0 486.5 L607.0 488.2 L607.9 489.3 L605.0 490.7 L605.0 492.5 L606.0 493.5 L606.0 496.2 L604.0 497.2 L604.0 499.9 L605.0 500.9 L605.0 506.5 L607.4 508.2 L603.0 510.5 L603.0 512.1 L607.9 513.5 L604.0 516.0 L604.0 521.0 L606.0 522.0 L606.0 524.1 L604.0 525.1 L604.0 530.2 L603.0 531.2 L603.0 535.5 L604.0 536.5 L604.0 540.0 L602.8 541.0 L602.8 544.8 L602.8 545.8 L602.8 548.5 L607.3 549.5 L604.0 551.0 L604.0 556.5 L605.0 557.5 L605.0 561.8 L608.0 563.2 L603.0 565.6 L603.0 568.2 L602.8 569.2 L602.8 574.1 L602.8 575.1 L602.8 580.1 L606.9 581.4 L604.0 582.7 L604.0 585.1 L606.7 586.4 L605.0 588.7 L605.0 591.1 L606.9 592.3 L605.0 594.1 L605.0 599.2 L603.0 600.2 L603.0 602.2 L602.8 603.2 L602.8 608.5 L602.8 609.5 L602.8 614.9 L607.4 616.0 L603.0 618.2 L603.0 623.9 L602.8 624.9 L602.8 628.4 L607.9 630.2 L605.0 631.4 L605.0 636.0 L603.0 637.0 L603.0 640.2 L606.9 641.4 L605.0 643.3 L605.0 648.9 L606.0 649.9 L606.0 653.3 L607.0 654.3 L607.0 656.1 L607.2 657.6 L604.0 659.2 L604.0 663.7 L607.5 665.2 L604.0 666.8 L604.0 670.2 L607.9 671.5 L605.0 673.0" fill="none" stroke="#000" stroke-width="1.25"/></svg>
</body></html>
